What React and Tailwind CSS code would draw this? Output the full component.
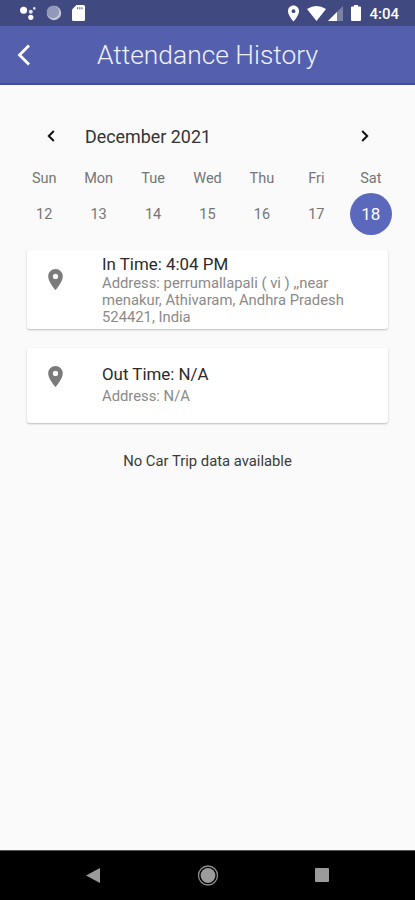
const days = [
  { name: "Sun", date: 12 },
  { name: "Mon", date: 13 },
  { name: "Tue", date: 14 },
  { name: "Wed", date: 15 },
  { name: "Thu", date: 16 },
  { name: "Fri", date: 17 },
  { name: "Sat", date: 18, selected: true },
];

function PinIcon({ className }) {
  return (
    <svg viewBox="0 0 24 24" fill="currentColor" className={className}>
      <path d="M12 2C8.13 2 5 5.13 5 9c0 5.25 7 13 7 13s7-7.75 7-13c0-3.87-3.13-7-7-7zm0 9.5a2.5 2.5 0 0 1 0-5 2.5 2.5 0 0 1 0 5z" />
    </svg>
  );
}

function StatusBar() {
  return (
    <div className="h-[26px] bg-[#414a80] flex items-center justify-between pl-5 pr-4 text-white">
      <div className="flex items-center">
        <svg viewBox="0 0 16 16" fill="currentColor" className="w-4 h-4">
          <circle cx="3.6" cy="5.2" r="3.5" />
          <circle cx="10.8" cy="6.8" r="2" opacity="0.85" />
          <circle cx="14.3" cy="3.4" r="1.3" opacity="0.85" />
          <circle cx="10.8" cy="12.3" r="2.6" />
        </svg>
        <svg viewBox="0 0 16 16" className="w-4 h-4 ml-[10px]">
          <circle cx="8" cy="8" r="7.2" fill="#c3c8dc" />
          <circle cx="7" cy="7" r="6.2" fill="#9299b8" />
        </svg>
        <svg viewBox="0 0 13 16" className="w-[13px] h-4 ml-[10px]">
          <path d="M4.5 0H11.5Q13 0 13 1.5V14.5Q13 16 11.5 16H1.5Q0 16 0 14.5V4.5z" fill="#fff" />
          <path d="M5 2.2h1.2v2H5zM7.2 2.2h1.2v2H7.2zM9.4 2.2h1.2v2H9.4z" fill="#6c7399" />
        </svg>
      </div>
      <div className="flex items-center">
        <PinIcon className="w-[19px] h-[19px]" />
        <svg viewBox="0 0 19 15" fill="currentColor" className="w-[19px] h-[15px] ml-1">
          <path d="M0 3Q9.5 -3 19 3L9.5 15z" />
        </svg>
        <svg viewBox="0 0 15 15" className="w-[15px] h-[15px] ml-[2px]">
          <path d="M15 0V15H0z" fill="#7a81a7" />
          <path d="M9 6V15H0z" fill="#fff" />
        </svg>
        <svg viewBox="0 0 10 16" fill="currentColor" className="w-[10px] h-4 ml-2">
          <path d="M3 0h4v1.6h2q1 0 1 1V15q0 1-1 1H1q-1 0-1-1V2.6q0-1 1-1h2z" />
        </svg>
        <span className="ml-2 mt-[2px] text-[15px] leading-none font-medium">4:04</span>
      </div>
    </div>
  );
}

function Header() {
  return (
    <header className="h-[59px] bg-[#5460ae] border-b-2 border-[#434c94] flex items-center justify-center relative">
      <svg
        viewBox="0 0 14 22"
        fill="none"
        stroke="white"
        strokeWidth="2.8"
        className="absolute left-[17px] top-[18px] w-[14px] h-[22px]"
      >
        <path d="M12 1.5L2.5 11L12 20.5" />
      </svg>
      <h1 className="pt-px text-[26.4px] font-light text-[#eef1ff] leading-none">Attendance History</h1>
    </header>
  );
}

function Calendar() {
  return (
    <section className="pt-[38px]">
      <div className="h-[26px] flex items-center pl-[47px] pr-[46px]">
        <svg viewBox="0 0 8 12" fill="none" stroke="#111" strokeWidth="2" className="w-2 h-3">
          <path d="M6.8 1L1.8 6L6.8 11" />
        </svg>
        <span className="ml-[30px] pt-px text-[17.9px] leading-6 text-[#333]">December 2021</span>
        <svg viewBox="0 0 8 12" fill="none" stroke="#111" strokeWidth="2" className="w-2 h-3 ml-auto">
          <path d="M1.2 1L6.2 6L1.2 11" />
        </svg>
      </div>
      <div className="grid grid-cols-7 px-[17px] pt-5 text-center text-[14.5px] text-[#757575]">
        {days.map((day) => (
          <div key={day.name} className="flex flex-col items-center">
            <span className="leading-5">{day.name}</span>
            {day.selected ? (
              <span className="mt-1 w-[42px] h-[42px] rounded-full bg-[#5b68bc] text-white text-[17px] pt-px flex items-center justify-center">
                {day.date}
              </span>
            ) : (
              <span className="mt-1 h-[42px] pt-px flex items-center">{day.date}</span>
            )}
          </div>
        ))}
      </div>
    </section>
  );
}

function TimeCard({ title, children, className, pinClassName }) {
  return (
    <div className={`mx-[27px] bg-white rounded-[3px] shadow-[0_1px_2px_rgba(0,0,0,0.25)] flex ${className}`}>
      <PinIcon className={`w-[25px] h-[25px] ml-4 text-[#7b7b7b] shrink-0 ${pinClassName}`} />
      <div className="ml-[34px] flex flex-col justify-center">
        <h2 className="-mt-px mb-px text-[16.9px] leading-5 text-[#2b2b2b]">{title}</h2>
        {children}
      </div>
    </div>
  );
}

function NavBar() {
  return (
    <nav className="h-[50px] bg-black border-t border-[#555] flex items-center justify-between px-[86px]">
      <svg viewBox="0 0 14 16" className="w-[14px] h-4">
        <path d="M0 7.5L14 0V15z" fill="#9b9b9b" />
      </svg>
      <svg viewBox="0 0 22 22" className="w-[22px] h-[22px]">
        <circle cx="11" cy="10.5" r="9.5" fill="none" stroke="#8e8e8e" strokeWidth="1.3" />
        <circle cx="11" cy="10.5" r="7.4" fill="#9b9b9b" />
      </svg>
      <span className="w-[14px] h-[14px] mb-px rounded-[1px] bg-[#9b9b9b]" />
    </nav>
  );
}

function App() {
  return (
    <div className="w-[415px] h-[900px] bg-[#fafafa] flex flex-col overflow-hidden font-[Roboto,sans-serif]">
      <StatusBar />
      <Header />
      <main className="flex-1">
        <Calendar />
        <TimeCard title="In Time: 4:04 PM" className="mt-[15px] h-[79px] pt-[2px]" pinClassName="mt-[15px]">
          <p className="text-[14.8px] leading-[17px] text-[#8a8a8a] whitespace-nowrap">
            Address: perrumallapali ( vi ) ,,near
            <br />
            menakur, Athivaram, Andhra Pradesh
            <br />
            524421, India
          </p>
        </TimeCard>
        <TimeCard title="Out Time: N/A" className="mt-[19px] h-[75px] pb-[2px]" pinClassName="mt-[15.5px]">
          <p className="mt-[3px] text-[14.8px] leading-[17px] text-[#8a8a8a]">Address: N/A</p>
        </TimeCard>
        <p className="mt-7 text-center text-[14.8px] leading-5 text-[#3a3a3a]">No Car Trip data available</p>
      </main>
      <NavBar />
    </div>
  );
}

export default App;
